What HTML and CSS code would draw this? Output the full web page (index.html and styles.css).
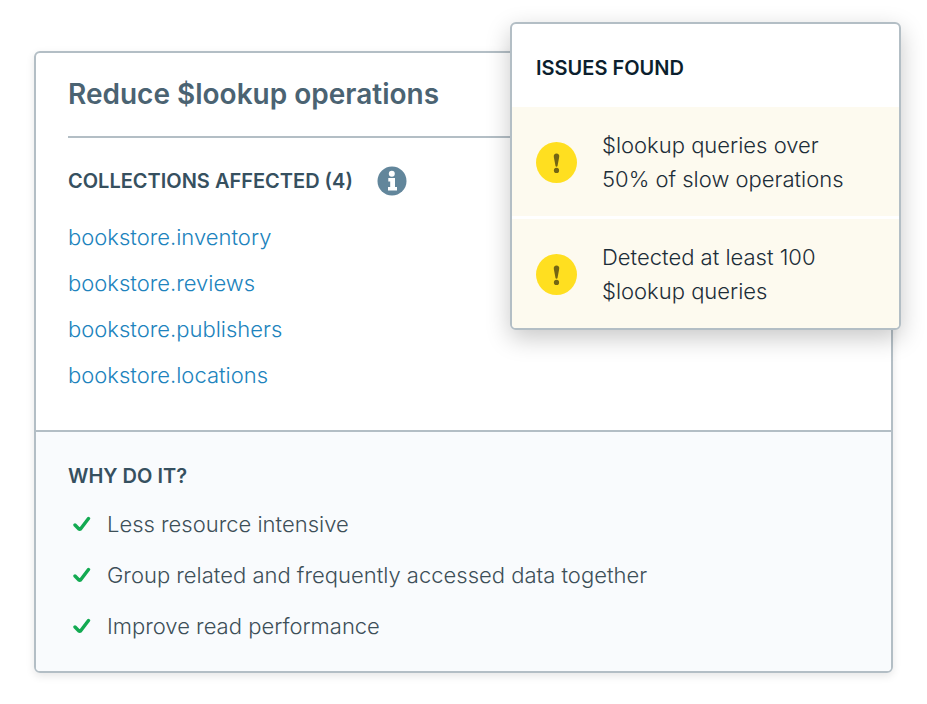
FILE: index.html
```html
<!DOCTYPE html>
<html lang="en">
<head>
    <meta charset="UTF-8">
    <meta name="viewport" content="width=device-width, initial-scale=1.0">
    <title>Reduce $lookup operations</title>
    <link rel="stylesheet" href="styles.css">
</head>
<body>
    <!-- Shared icon shapes -->
    <svg class="sprite" aria-hidden="true">
        <symbol id="icon-warning" viewBox="0 0 41 41">
            <circle cx="20.5" cy="20.5" r="20.5" fill="#ffdf20"/>
            <path d="M20.5 11.5c1.9 0 3 1.3 2.7 3.3l-1.7 9.2c-.2 1-1.8 1-2 0l-1.7-9.2c-.3-2 .8-3.3 2.7-3.3z" fill="#736514"/>
            <circle cx="20.5" cy="28.4" r="2.6" fill="#736514"/>
        </symbol>
        <symbol id="icon-check" viewBox="0 0 18 16">
            <path d="M2 9l3.700 3.800q1 .8 2 0L15.500 2.500" fill="none" stroke="#13aa52" stroke-width="3.4" stroke-linecap="round" stroke-linejoin="round"/>
        </symbol>
    </svg>

    <main class="advice">
        <article class="card">
            <section class="summary">
                <h1 class="title">Reduce $lookup operations</h1>

                <div class="heading-row">
                    <h2 class="heading">COLLECTIONS AFFECTED (4)</h2>
                    <button type="button" class="info-button" aria-label="About affected collections">
                        <svg viewBox="0 0 30 30" aria-hidden="true">
                            <circle cx="15" cy="15" r="14.5" fill="#62869b"/>
                            <circle cx="14.8" cy="7.8" r="3" fill="#fff"/>
                            <path d="M11.3 12h6.7v9h2v3.500h-9V21h2.200v-5.500h-1.900z" fill="#fff"/>
                        </svg>
                    </button>
                </div>

                <ul class="collections">
                    <li><a href="#inventory">bookstore.inventory</a></li>
                    <li><a href="#reviews">bookstore.reviews</a></li>
                    <li><a href="#publishers">bookstore.publishers</a></li>
                    <li><a href="#locations">bookstore.locations</a></li>
                </ul>
            </section>

            <section class="reasons">
                <h2 class="heading">WHY DO IT?</h2>
                <ul class="reason-list">
                    <li><svg class="check" aria-hidden="true"><use href="#icon-check"/></svg>Less resource intensive</li>
                    <li><svg class="check" aria-hidden="true"><use href="#icon-check"/></svg>Group related and frequently accessed data together</li>
                    <li><svg class="check" aria-hidden="true"><use href="#icon-check"/></svg>Improve read performance</li>
                </ul>
            </section>
        </article>

        <aside class="issues">
            <h2 class="heading issues-heading">ISSUES FOUND</h2>
            <ul class="issue-list">
                <li class="issue">
                    <svg class="warning" aria-hidden="true"><use href="#icon-warning"/></svg>
                    <p>$lookup queries over 50% of slow operations</p>
                </li>
                <li class="issue">
                    <svg class="warning" aria-hidden="true"><use href="#icon-warning"/></svg>
                    <p>Detected at least 100 $lookup queries</p>
                </li>
            </ul>
        </aside>
    </main>
</body>
</html>
```
FILE: styles.css
```css
* {
    box-sizing: border-box;
}
body {
    margin: 0;
    padding: 51px 34px 31px;
    background: #fff;
    color: #3d4f58;
    font-family: Inter, "Liberation Sans", sans-serif;
    font-size: 22px;
    font-weight: 300;
    line-height: 26px;
}
h1, h2, p, ul {
    margin: 0;
    padding: 0;
}
ul {
    list-style: none;
}
.sprite {
    position: absolute;
    width: 0;
    height: 0;
}
.advice {
    position: relative;
}
.card {
    border: 2px solid #b3bec5;
    border-radius: 6px;
    box-shadow: 0 3px 8px rgba(0, 0, 0, 0.1);
    overflow: hidden;
}
.summary {
    padding: 24px 32px 32px;
}
.title {
    padding-bottom: 25px;
    margin-bottom: 28px;
    border-bottom: 2px solid #b3bec5;
    color: #4b6372;
    font-size: 28px;
    font-weight: 600;
    line-height: 34px;
}
.heading {
    color: #36505f;
    font-size: 20px;
    font-weight: 600;
    line-height: 30px;
}
.heading-row {
    display: flex;
    align-items: center;
    gap: 24px;
    margin-bottom: 18px;
}
.info-button {
    width: 30px;
    height: 30px;
    padding: 0;
    border: 0;
    background: none;
    cursor: pointer;
}
.info-button svg {
    display: block;
}
.collections li {
    line-height: 46px;
}
.collections a {
    color: #2083bd;
    text-decoration: none;
}
.collections a:hover {
    text-decoration: underline;
}
.reasons {
    padding: 29px 32px 32px;
    border-top: 2px solid #b3bec5;
    background: #f9fbfd;
}
.reason-list {
    display: grid;
    gap: 25px;
    margin-top: 20px;
}
.reason-list li {
    display: flex;
    align-items: center;
    gap: 16px;
    padding-left: 5px;
}
.check {
    flex: none;
    width: 18px;
    height: 16px;
}

/* Floating panel over the card's top right corner */
.issues {
    position: absolute;
    top: -29px;
    right: -8px;
    width: 391px;
    border: 2px solid #b3bec5;
    border-radius: 6px;
    background: #fff;
    box-shadow: 0 8px 24px rgba(0, 0, 0, 0.22);
    color: #1c2d38;
    overflow: hidden;
}
.issues-heading {
    padding: 29px 24px 24px;
    color: #0b1f2e;
}
.issue-list {
    display: grid;
    gap: 3px;
}
.issue {
    display: flex;
    align-items: center;
    gap: 25px;
    padding: 21px 32px 20px 24px;
    background: #fdfaef;
    line-height: 34px;
}
.warning {
    flex: none;
    width: 41px;
    height: 41px;
}
```
